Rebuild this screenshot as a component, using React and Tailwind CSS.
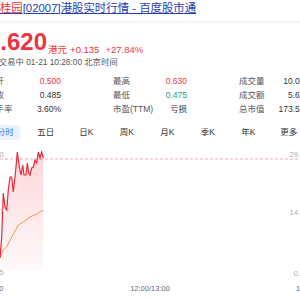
import React from "react";

const red = [
  [0, 258], [1.7, 237], [3.3, 193], [5, 207], [6.7, 210], [8.3, 190], [10, 177], [11.7, 177],
  [13.3, 192], [15, 177], [16, 167], [17.3, 152], [19.3, 167], [21, 175], [22.7, 165], [24, 175],
  [26, 175], [27.3, 163], [28.7, 173], [30, 175], [31.7, 168], [33.3, 167], [35, 160], [36.7, 163],
  [38.3, 152], [40, 158], [41.7, 152], [43.3, 158],
];
const avg = [
  [0, 258], [3.3, 250], [6.7, 247], [11.7, 237], [18.3, 225], [23.3, 222], [30, 217], [36.7, 214], [43.3, 210],
];

function Chart() {
  const off = 140;
  const pts = (a) => a.map(([x, y]) => `${x},${y - off}`).join(" ");
  const area = `0,${270 - off} ${pts(red)} 43.3,${270 - off}`;
  return (
    <div className="relative w-[300px] h-[160px]">
      <svg width="300" height="160" viewBox="0 0 300 160" className="block">
        <defs>
          <linearGradient id="g" x1="0" y1="0" x2="0" y2="1">
            <stop offset="0%" stopColor="#f23645" stopOpacity="0.2" />
            <stop offset="100%" stopColor="#f23645" stopOpacity="0.03" />
          </linearGradient>
        </defs>
        <line x1="0" y1="19" x2="300" y2="19" stroke="#f8a5aa" strokeWidth="1" strokeDasharray="3 2" />
        <polygon points={area} fill="url(#g)" />
        <polyline points={pts(avg)} fill="none" stroke="#f39a45" strokeWidth="1" />
        <polyline points={pts(red)} fill="none" stroke="#e8283a" strokeWidth="1.2" />
        <g fontFamily="'Liberation Sans', Arial, sans-serif" fontSize="7.5" fill="#a8aebb">
          <text x="-15" y="16.5">0.630</text>
          <text x="-15" y="73.5">0.557</text>
          <text x="-15" y="134.5">0.485</text>
          <text x="315" y="16.5" textAnchor="end">29.90%</text>
          <text x="315" y="74.5" textAnchor="end">14.95%</text>
          <text x="315" y="135.5" textAnchor="end">0.00%</text>
        </g>
        <g fontFamily="'Liberation Sans', Arial, sans-serif" fontSize="7.5" fill="#666a73">
          <text x="3.5" y="150.5" textAnchor="end">09:30</text>
          <text x="150" y="150.5" textAnchor="middle">12:00/13:00</text>
          <text x="296" y="150.5">16:00</text>
        </g>
      </svg>
    </div>
  );
}

const stats = [
  [["今开", "0.500", "text-[#f0343f]"], ["最高", "0.630", "text-[#f0343f]"], ["成交量", "10.09亿", "text-[#333]"]],
  [["昨收", "0.485", "text-[#333]"], ["最低", "0.475", "text-[#18a07a]"], ["成交额", "5.64亿", "text-[#333]"]],
  [["换手率", "3.60%", "text-[#333]"], ["市盈(TTM)", "亏损", "text-[#333]"], ["总市值", "173.58亿", "text-[#333]"]],
];

const tabs = ["分时", "五日", "日K", "周K", "月K", "季K", "年K", "更多"];

export default function App() {
  return (
    <div
      className="w-[300px] h-[300px] overflow-hidden bg-white"
      style={{ fontFamily: "'Liberation Sans', Arial, 'Noto Sans CJK SC', sans-serif" }}
    >
      <div className="h-[23px] border-b-2 border-[#f5f5f7]">
        <div className="-ml-[11.5px] pt-[2px] text-[11.4px] leading-[13px] whitespace-nowrap">
          <a className="underline text-[#2440b3] decoration-[#2440b3]">
            <span className="text-[#f73131]">碧桂园</span>[02007]港股实时行情 - 百度股市通
          </a>
        </div>
      </div>
      <div className="-ml-[13px] w-[400px]">
        <div className="mt-[7px] flex items-end h-[24px] whitespace-nowrap">
          <span className="text-[24px] leading-[24px] font-bold text-[#f0343f]">0.620</span>
          <span className="ml-[1px] -mb-[2px] text-[9.5px] leading-[12px] text-[#f0343f]">
            港元<span className="ml-[3px]">+0.135</span>
            <span className="ml-[6px]">+27.84%</span>
          </span>
        </div>
        <div className="mt-[3px] ml-[12px] text-[8.3px] leading-[10px] text-[#555] whitespace-nowrap">
          交易中 01-21 10:28:00 北京时间
        </div>
        <div className="mt-[7px] flex flex-col">
          {stats.map((row, i) => (
            <div key={i} className="flex h-[14px] items-center text-[8.5px] whitespace-nowrap">
              {row.map(([l, v, c], j) => (
                <div key={j} className="w-[126px] shrink-0 flex">
                  <div className="w-[74px] shrink-0 flex justify-between">
                    <span className="text-[#555]">{l}</span>
                    <span className={c}>{v}</span>
                  </div>
                </div>
              ))}
            </div>
          ))}
        </div>
        <div className="mt-[9px] flex h-[15px] -ml-[2px]">
          {tabs.map((t, i) => (
            <div key={t} className="w-[40.5px] flex justify-center shrink-0">
              <span
                className={
                  i === 0
                    ? "w-[29px] h-[15px] rounded-[4px] bg-[#eaf1ff] text-[#3a74f5] text-[8.5px] leading-[15px] text-center"
                    : "h-[15px] text-[8.5px] leading-[15px] text-[#333]"
                }
              >
                {t}
              </span>
            </div>
          ))}
        </div>
      </div>
      <Chart />
    </div>
  );
}
